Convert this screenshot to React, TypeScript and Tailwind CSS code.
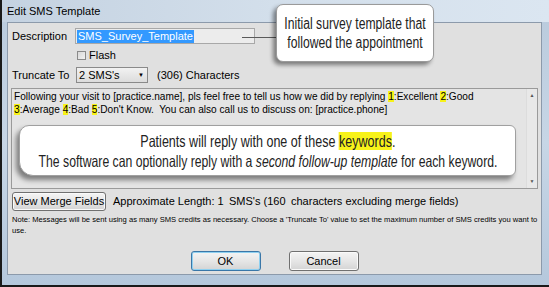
import React from "react";

const ui = { fontFamily: "'Liberation Sans', Arial, sans-serif" };

function Btn({ children, w, def }: { children: React.ReactNode; w: string; def?: boolean }) {
  return (
    <div
      className={`${w} shrink-0 flex items-center justify-center whitespace-nowrap rounded-[3px] border text-[11px] text-black bg-gradient-to-b from-[#f4f4f4] via-[#e6e6e6] to-[#d4d4d4] ${
        def ? "border-[#3a77a8] shadow-[inset_0_0_0_1px_#8fd0f0]" : "border-[#707070] shadow-[inset_0_0_0_1px_#fafafa]"
      }`}
    >
      {children}
    </div>
  );
}

function Hl({ children }: { children: React.ReactNode }) {
  return <span className="bg-[#f7f21a]">{children}</span>;
}

export default function App() {
  return (
    <div style={ui} className="relative w-[549px] h-[287px] overflow-hidden bg-gradient-to-b from-[#b9cadc] via-[#c7d6e6] to-[#b5c8dc] border-l-2 border-b-2 border-[#1a1a1a] flex flex-col">
      {/* title bar */}
      <div className="h-[22px] flex items-center pl-[5px] text-[11px] text-black bg-gradient-to-r from-[#c4d2e1] via-[#d3dfeb] to-[#dbe6f1]">
        Edit SMS Template
      </div>
      {/* client */}
      <div className="ml-[5px] w-[535px] h-[253px] border border-[#8c9aab] bg-[#e0e0e0] flex flex-col pl-[3px] pt-[5px] text-[11px] text-black">
        {/* description row */}
        <div className="flex items-center h-[16px]">
          <div className="w-[64px] shrink-0 pl-[1px]">Description</div>
          <div className="w-[180px] h-[16px] border border-[#a8a8a8] bg-[#ececec] flex items-center pl-[1px]">
            <span className="bg-[#3399ff] text-white px-[1px] leading-[13px]">SMS_Survey_Template</span>
          </div>
        </div>
        {/* flash row */}
        <div className="flex items-center h-[12px] mt-[5px] ml-[66px] gap-[3px]">
          <div className="w-[9px] h-[9px] border border-[#8a8a8a] bg-gradient-to-br from-[#d8d8d8] to-[#f2f2f2]" />
          <span>Flash</span>
        </div>
        {/* truncate row */}
        <div className="flex items-center h-[16px] mt-[6px]">
          <div className="w-[65px] shrink-0 pl-[1px]">Truncate To</div>
          <div className="w-[72px] h-[16px] border border-[#8a8a8a] bg-gradient-to-b from-[#f2f2f2] to-[#dcdcdc] flex items-center pl-[2px] justify-between pr-[3px]">
            <span>2 SMS's</span>
            <span className="text-[6px]">▼</span>
          </div>
          <div className="ml-[9px]">(306) Characters</div>
        </div>
        {/* text area */}
        <div className="mt-[5px] w-[527px] h-[101px] border border-[#9a9a9a] bg-[#e4e4e4] flex">
          <div className="flex-1 pl-[2px] pt-[1px] text-[10.1px] leading-[13px]">
            <div>
              Following your visit to [practice.name], pls feel free to tell us how we did by replying <Hl>1</Hl>:Excellent <Hl>2</Hl>:Good
            </div>
            <div>
              <Hl>3</Hl>:Average <Hl>4</Hl>:Bad <Hl>5</Hl>:Don't Know.&nbsp; You can also call us to discuss on: [practice.phone]
            </div>
          </div>
          <div className="w-[11px] flex flex-col justify-between items-center py-[3px] text-[5px] text-[#555] bg-[#e8e8e8] border-l border-[#dcdcdc]">
            <span>▲</span>
            <span>▼</span>
          </div>
        </div>
        {/* merge row */}
        <div className="flex items-center h-[19px] mt-[3px] ml-[1px]">
          <Btn w="w-[94px] h-[19px]">View Merge Fields</Btn>
          <div className="ml-[7px] text-[11px] flex shrink-0 whitespace-nowrap">
            <span className="w-[116px] shrink-0">Approximate Length: 1</span>
            <span className="w-[62px] shrink-0">SMS's (160</span>
            <span className="shrink-0">characters excluding merge fields)</span>
          </div>
        </div>
        {/* note */}
        <div className="mt-[3px] ml-[1px] text-[7.6px] leading-[11px] w-[528px]">
          Note: Messages will be sent using as many SMS credits as necessary. Choose a 'Truncate To' value to set the maximum number of SMS credits you want to use.
        </div>
        {/* ok cancel */}
        <div className="mt-[15px] flex justify-center gap-[28px] pr-[3px]">
          <Btn w="w-[70px] h-[20px]" def>OK</Btn>
          <Btn w="w-[70px] h-[20px]">Cancel</Btn>
        </div>
      </div>

      {/* connector line */}
      <div className="absolute left-[240px] top-[37px] w-[36px] h-px bg-[#5a5a5a]" />
      {/* callout 1 */}
      <div className="absolute left-[274px] top-[4px] w-[158px] h-[58px] rounded-[7px] bg-white border border-[#9a9a9a] shadow-[-3px_3px_4px_rgba(0,0,0,0.45)] flex flex-col items-center justify-center text-[16px] leading-[19px] text-[#222]">
        <span className="inline-block whitespace-nowrap scale-x-[0.76]">Initial survey template that</span>
        <span className="inline-block whitespace-nowrap scale-x-[0.76]">followed the appointment</span>
      </div>
      {/* callout 2 */}
      <div className="absolute left-[17px] top-[125px] w-[497px] h-[51px] rounded-tl-[10px] rounded-bl-[14px] rounded-r-[6px] bg-white border border-[#a0a0a0] shadow-[-3px_4px_5px_rgba(0,0,0,0.45)] flex flex-col items-center justify-center text-[16.5px] leading-[20px] text-[#222]">
        <span className="inline-block whitespace-nowrap scale-x-[0.76]">
          Patients will reply with one of these <span className="bg-[#f7f21a]">keywords</span>.
        </span>
        <span className="inline-block whitespace-nowrap scale-x-[0.74]">
          The software can optionally reply with a <i>second follow-up template</i> for each keyword.
        </span>
      </div>
    </div>
  );
}
